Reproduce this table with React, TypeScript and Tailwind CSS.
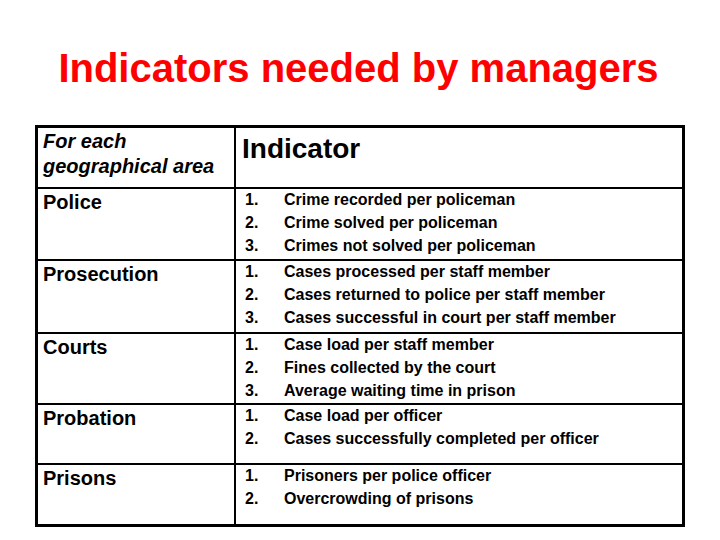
const rows: { area: string; items: string[]; h: string }[] = [
  {
    area: "Police",
    items: ["Crime recorded per policeman", "Crime solved per policeman", "Crimes not solved per policeman"],
    h: "h-[72px]",
  },
  {
    area: "Prosecution",
    items: [
      "Cases processed per staff member",
      "Cases returned to police per staff member",
      "Cases successful in court per staff member",
    ],
    h: "h-[73px]",
  },
  {
    area: "Courts",
    items: ["Case load per staff member", "Fines collected by the court", "Average waiting time in prison"],
    h: "h-[71px]",
  },
  {
    area: "Probation",
    items: ["Case load per officer", "Cases successfully completed per officer"],
    h: "h-[60px]",
  },
  {
    area: "Prisons",
    items: ["Prisoners per police officer", "Overcrowding of prisons"],
    h: "h-[59px]",
  },
];

export default function App() {
  return (
    <div
      className="w-[720px] h-[540px] bg-white text-black overflow-hidden"
      style={{ fontFamily: '"Liberation Sans", Arial, sans-serif' }}
    >
      <h1 className="pt-[44px] h-[94px] text-center text-[40px] leading-[48px] font-bold text-[#ff0000] pr-[3px]">
        Indicators needed by managers
      </h1>
      <div className="mt-[31px] ml-[35px] w-[650px] border-[3px] border-black">
        <div className="grid grid-cols-[198px_1fr] h-[61px] border-b-2 border-black">
          <div className="border-r-2 border-black pl-[5px] pt-[1px] text-[20px] leading-[25px] font-bold italic">
            <div>For each</div>
            <div>geographical area</div>
          </div>
          <div className="pl-[6px] pt-[5px] text-[28px] leading-[32px] font-bold">Indicator</div>
        </div>
        {rows.map((r, i) => (
          <div
            key={r.area}
            className={`grid grid-cols-[198px_1fr] ${r.h} ${i < rows.length - 1 ? "border-b-2 border-black" : ""}`}
          >
            <div className="border-r-2 border-black pl-[5px] pt-[2px] text-[20px] leading-[23px] font-bold">
              {r.area}
            </div>
            <div className="pl-[9px] -mt-[1px] text-[16px] leading-[23px] font-bold">
              {r.items.map((t, j) => (
                <div key={t} className="flex">
                  <span className="w-[39px] shrink-0">{j + 1}.</span>
                  <span>{t}</span>
                </div>
              ))}
            </div>
          </div>
        ))}
      </div>
    </div>
  );
}
